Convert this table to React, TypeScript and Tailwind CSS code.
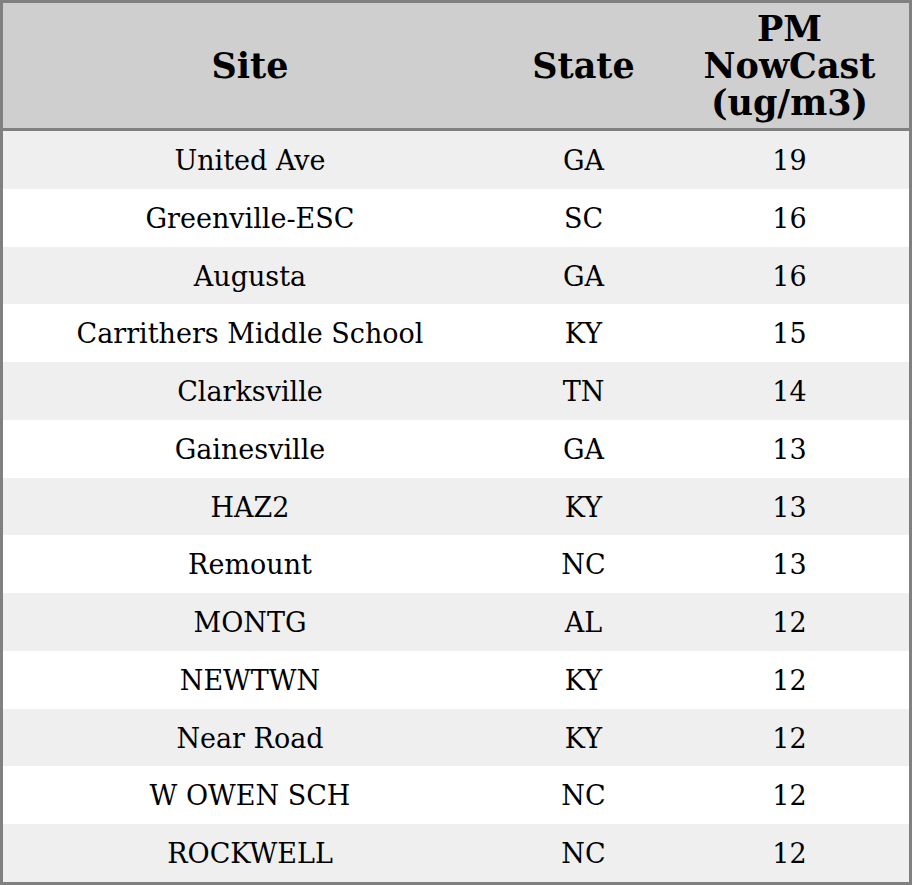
const rows = [
  { site: "United Ave", state: "GA", pm: 19 },
  { site: "Greenville-ESC", state: "SC", pm: 16 },
  { site: "Augusta", state: "GA", pm: 16 },
  { site: "Carrithers Middle School", state: "KY", pm: 15 },
  { site: "Clarksville", state: "TN", pm: 14 },
  { site: "Gainesville", state: "GA", pm: 13 },
  { site: "HAZ2", state: "KY", pm: 13 },
  { site: "Remount", state: "NC", pm: 13 },
  { site: "MONTG", state: "AL", pm: 12 },
  { site: "NEWTWN", state: "KY", pm: 12 },
  { site: "Near Road", state: "KY", pm: 12 },
  { site: "W OWEN SCH", state: "NC", pm: 12 },
  { site: "ROCKWELL", state: "NC", pm: 12 },
];

const cols = "grid grid-cols-[494px_173px_239px]";

export default function App() {
  return (
    <div className="w-[912px] bg-white font-['DejaVu_Serif',serif] text-black">
      <div className="border-[3px] border-[#808080]">
        {/* header */}
        <div className={`${cols} h-[128px] items-center border-b-[3px] border-[#808080] bg-[#cfcfcf] text-center text-[35px] leading-[37px] font-bold`}>
          <div>Site</div>
          <div>State</div>
          <div>
            PM
            <br />
            NowCast
            <br />
            (ug/m3)
          </div>
        </div>

        {rows.map((row, i) => (
          <div
            key={row.site}
            className={`${cols} h-[57.75px] items-center pt-[3px] text-center text-[27px] ${
              i % 2 === 0 ? "bg-[#efefef]" : "bg-white"
            }`}
          >
            <div>{row.site}</div>
            <div>{row.state}</div>
            <div>{row.pm}</div>
          </div>
        ))}
      </div>
    </div>
  );
}
